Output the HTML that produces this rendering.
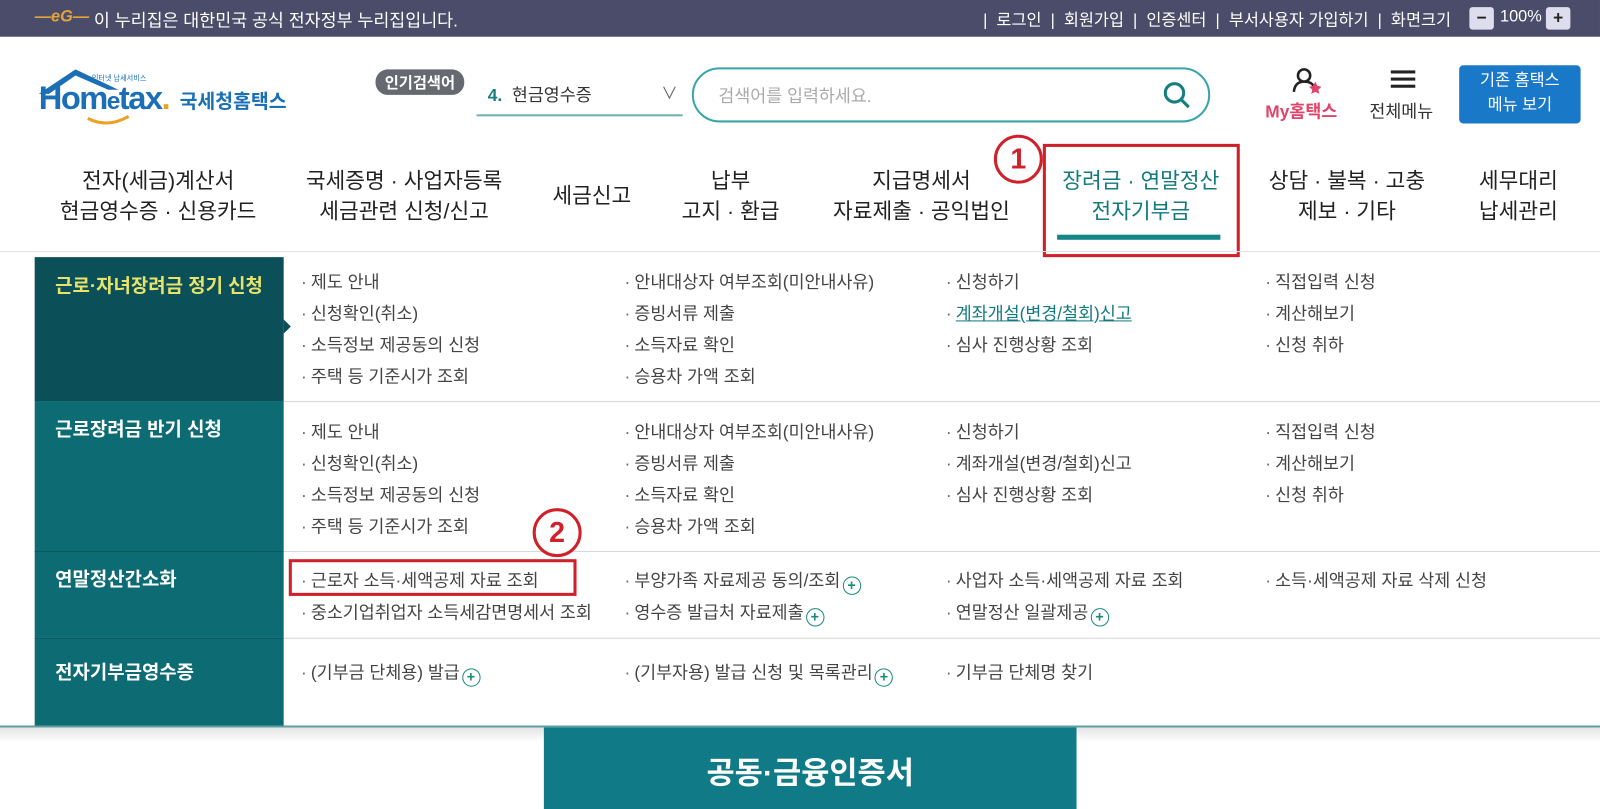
<!DOCTYPE html>
<html><head><meta charset="utf-8"><style>
*{margin:0;padding:0;box-sizing:border-box}
body{width:1600px;height:806px;overflow:hidden;background:#fff;font-family:"Liberation Sans","Noto Sans CJK KR",sans-serif;position:relative;color:#333}
#w{position:absolute;left:0;top:0;width:1568px;height:790px;transform:scale(1.0204);transform-origin:0 0}
.a{position:absolute;white-space:nowrap}
.top{left:0;top:0;width:1568px;height:36px;background:#4a4c69;color:#fff;font-size:17px}
.nav{font-size:21px;color:#222;text-align:center;line-height:30px;transform:translateX(-50%)}
.side{left:34px;width:244px;color:#fff;font-size:18.5px;font-weight:bold;padding:14px 0 0 20px}
.li{font-size:17px;color:#444}
.li:before{content:"·";margin-right:4px;color:#666}
.plus{display:inline-block;width:18px;height:18px;border:1.5px solid #1a8a7e;border-radius:50%;color:#1a8a7e;font-size:14px;line-height:14px;text-align:center;vertical-align:-3px;margin-left:2px;font-weight:bold}
.hr{left:278px;width:1290px;height:1px;background:#d8d8d8}
.circ{width:48px;height:48px;border:3px solid #d0202a;border-radius:50%;background:#fff;color:#d0202a;font-size:28px;font-weight:bold;text-align:center;line-height:42px}
</style></head><body><div id="w">
<div class="a top">
 <div class="a" style="left:34px;top:8px;width:50px;height:18px;color:#e2a43a;font-weight:bold;font-style:italic;font-size:16px;line-height:18px">—eG—</div>
 <div class="a" style="left:92px;top:6px">이 누리집은 대한민국 공식 전자정부 누리집입니다.</div>
 <div class="a" style="right:146px;top:6px;font-size:16px">|&nbsp;&nbsp;로그인&nbsp;&nbsp;|&nbsp;&nbsp;회원가입&nbsp;&nbsp;|&nbsp;&nbsp;인증센터&nbsp;&nbsp;|&nbsp;&nbsp;부서사용자 가입하기&nbsp;&nbsp;|&nbsp;&nbsp;화면크기</div>
 <div class="a" style="left:1440px;top:7px;width:24px;height:22px;background:#dde;color:#222;text-align:center;font-weight:bold;line-height:22px;border-radius:3px">−</div>
 <div class="a" style="left:1470px;top:8px;font-size:16px">100%</div>
 <div class="a" style="left:1515px;top:7px;width:24px;height:22px;background:#dde;color:#222;text-align:center;font-weight:bold;line-height:22px;border-radius:3px">+</div>
</div>
<svg class="a" style="left:36px;top:62px" width="100" height="62"><path d="M2 30 L38 6 L80 26 L70 26 L38 12 L12 30 Z" fill="#1a6fb6"/><path d="M50 54 Q70 64 90 52" stroke="#f0a020" stroke-width="3" fill="none"/></svg>
<div class="a" style="left:38px;top:78px;font-size:32px;font-weight:bold;color:#1a6fb6;letter-spacing:-1.5px">Hom<span style="font-size:24px">e</span>tax<span style="color:#f0a020">.</span></div>
<div class="a" style="left:90px;top:72px;font-size:7px;color:#1a6fb6">인터넷 납세서비스</div>
<div class="a" style="left:176px;top:85px;font-size:19px;font-weight:bold;color:#1a6fb6">국세청홈택스</div>
<div class="a" style="left:368px;top:68px;background:#666a70;color:#fff;font-size:15px;font-weight:bold;padding:2px 9px;border-radius:12px">인기검색어</div>
<div class="a" style="left:478px;top:79px;font-size:17px;color:#333"><b style="color:#167f7e">4.</b>&nbsp; 현금영수증</div>
<div class="a" style="left:648px;top:78px;font-size:16px;color:#666">∨</div>
<div class="a" style="left:467px;top:112px;width:202px;height:2px;background:#6bb3b0"></div>
<div class="a" style="left:678px;top:66px;width:508px;height:54px;border:2px solid #3aa5a8;border-radius:27px"></div>
<div class="a" style="left:704px;top:80px;font-size:17px;color:#aaa">검색어를 입력하세요.</div>
<svg class="a" style="left:1138px;top:78px" width="30" height="30"><circle cx="13" cy="13" r="9" stroke="#157e80" stroke-width="3" fill="none"/><path d="M20 20 L27 27" stroke="#157e80" stroke-width="3"/></svg>
<svg class="a" style="left:1265px;top:66px" width="34" height="28"><circle cx="13" cy="8" r="6" stroke="#222" stroke-width="2.5" fill="none"/><path d="M3 24 Q4 14 13 14 Q20 14 22 18" stroke="#222" stroke-width="2.5" fill="none"/><path d="M24 14 l2 4 4 1 -3 3 1 4 -4 -2 -4 2 1 -4 -3 -3 4 -1z" fill="#e0446a"/></svg>
<div class="a" style="left:1240px;top:95px;font-size:17px;font-weight:bold;color:#e0446a">My홈택스</div>
<div class="a" style="left:1363px;top:69px;width:24px;height:3px;background:#222;box-shadow:0 7px 0 #222,0 14px 0 #222"></div>
<div class="a" style="left:1342px;top:95px;font-size:17px;color:#333">전체메뉴</div>
<div class="a" style="left:1430px;top:64px;width:119px;height:57px;background:#1a78c8;border-radius:4px;color:#fff;font-size:16px;text-align:center;line-height:24px;padding-top:4px">기존 홈택스<br>메뉴 보기</div>
<div class="a nav" style="left:155px;top:163px">전자(세금)계산서<br>현금영수증 · 신용카드</div>
<div class="a nav" style="left:396px;top:163px">국세증명 · 사업자등록<br>세금관련 신청/신고</div>
<div class="a nav" style="left:580px;top:178px">세금신고</div>
<div class="a nav" style="left:716px;top:163px">납부<br>고지 · 환급</div>
<div class="a nav" style="left:903px;top:163px">지급명세서<br>자료제출 · 공익법인</div>
<div class="a nav" style="left:1118px;top:163px;color:#137a7d">장려금 · 연말정산<br>전자기부금</div>
<div class="a nav" style="left:1320px;top:163px">상담 · 불복 · 고충<br>제보 · 기타</div>
<div class="a nav" style="left:1488px;top:163px">세무대리<br>납세관리</div>
<div class="a" style="left:1036px;top:230px;width:160px;height:5px;background:#14868a"></div>
<div class="a" style="left:1022px;top:141px;width:193px;height:111px;border:3px solid #d0202a"></div>
<div class="a circ" style="left:974px;top:132px">1</div>
<div class="a" style="left:0;top:246px;width:1568px;height:1px;background:#e3e3e3"></div>
<div class="a side" style="top:252px;height:141px;background:#0b4f58;color:#e8e46a">근로·자녀장려금 정기 신청</div>
<div class="a" style="left:278px;top:313px;border-left:7px solid #0b4f58;border-top:7px solid transparent;border-bottom:7px solid transparent"></div>
<div class="a side" style="top:393px;height:147px;background:#0d6b74">근로장려금 반기 신청</div>
<div class="a side" style="top:540px;height:85px;background:#0d6b74;padding-top:14px">연말정산간소화</div>
<div class="a side" style="top:625px;height:87px;background:#0d6b74;padding-top:20px">전자기부금영수증</div>
<div class="a" style="left:34px;top:540px;width:244px;height:1px;background:#0a5860"></div>
<div class="a" style="left:34px;top:625px;width:244px;height:1px;background:#0a5860"></div>
<div class="a hr" style="top:393px"></div><div class="a hr" style="top:540px"></div><div class="a hr" style="top:625px"></div>
<div class="a li" style="left:295px;top:262px">제도 안내</div>
<div class="a li" style="left:295px;top:293px">신청확인(취소)</div>
<div class="a li" style="left:295px;top:324px">소득정보 제공동의 신청</div>
<div class="a li" style="left:295px;top:355px">주택 등 기준시가 조회</div>
<div class="a li" style="left:612px;top:262px">안내대상자 여부조회(미안내사유)</div>
<div class="a li" style="left:612px;top:293px">증빙서류 제출</div>
<div class="a li" style="left:612px;top:324px">소득자료 확인</div>
<div class="a li" style="left:612px;top:355px">승용차 가액 조회</div>
<div class="a li" style="left:927px;top:262px">신청하기</div>
<div class="a li" style="left:927px;top:293px"><span style="text-decoration:underline;color:#137a7d">계좌개설(변경/철회)신고</span></div>
<div class="a li" style="left:927px;top:324px">심사 진행상황 조회</div>
<div class="a li" style="left:1240px;top:262px">직접입력 신청</div>
<div class="a li" style="left:1240px;top:293px">계산해보기</div>
<div class="a li" style="left:1240px;top:324px">신청 취하</div>
<div class="a li" style="left:295px;top:409px">제도 안내</div>
<div class="a li" style="left:295px;top:440px">신청확인(취소)</div>
<div class="a li" style="left:295px;top:471px">소득정보 제공동의 신청</div>
<div class="a li" style="left:295px;top:502px">주택 등 기준시가 조회</div>
<div class="a li" style="left:612px;top:409px">안내대상자 여부조회(미안내사유)</div>
<div class="a li" style="left:612px;top:440px">증빙서류 제출</div>
<div class="a li" style="left:612px;top:471px">소득자료 확인</div>
<div class="a li" style="left:612px;top:502px">승용차 가액 조회</div>
<div class="a li" style="left:927px;top:409px">신청하기</div>
<div class="a li" style="left:927px;top:440px">계좌개설(변경/철회)신고</div>
<div class="a li" style="left:927px;top:471px">심사 진행상황 조회</div>
<div class="a li" style="left:1240px;top:409px">직접입력 신청</div>
<div class="a li" style="left:1240px;top:440px">계산해보기</div>
<div class="a li" style="left:1240px;top:471px">신청 취하</div>
<div class="a li" style="left:295px;top:555px">근로자 소득·세액공제 자료 조회</div>
<div class="a li" style="left:295px;top:586px">중소기업취업자 소득세감면명세서 조회</div>
<div class="a li" style="left:612px;top:555px">부양가족 자료제공 동의/조회<span class="plus">+</span></div>
<div class="a li" style="left:612px;top:586px">영수증 발급처 자료제출<span class="plus">+</span></div>
<div class="a li" style="left:927px;top:555px">사업자 소득·세액공제 자료 조회</div>
<div class="a li" style="left:927px;top:586px">연말정산 일괄제공<span class="plus">+</span></div>
<div class="a li" style="left:1240px;top:555px">소득·세액공제 자료 삭제 신청</div>
<div class="a" style="left:283px;top:548px;width:282px;height:36px;border:3px solid #d0202a"></div>
<div class="a circ" style="left:522px;top:498px">2</div>
<div class="a li" style="left:295px;top:645px">(기부금 단체용) 발급<span class="plus">+</span></div>
<div class="a li" style="left:612px;top:645px">(기부자용) 발급 신청 및 목록관리<span class="plus">+</span></div>
<div class="a li" style="left:927px;top:645px">기부금 단체명 찾기</div>
<div class="a" style="left:0;top:711px;width:1568px;height:2px;background:#5e9fa3"></div>
<div class="a" style="left:0;top:713px;width:1568px;height:14px;background:linear-gradient(#e4e4e4,#fff)"></div>
<div class="a" style="left:533px;top:713px;width:522px;height:80px;background:#107b86;color:#fff;font-size:30px;font-weight:bold;text-align:center;padding-top:20px">공동·금융인증서</div>
</div></body></html>
